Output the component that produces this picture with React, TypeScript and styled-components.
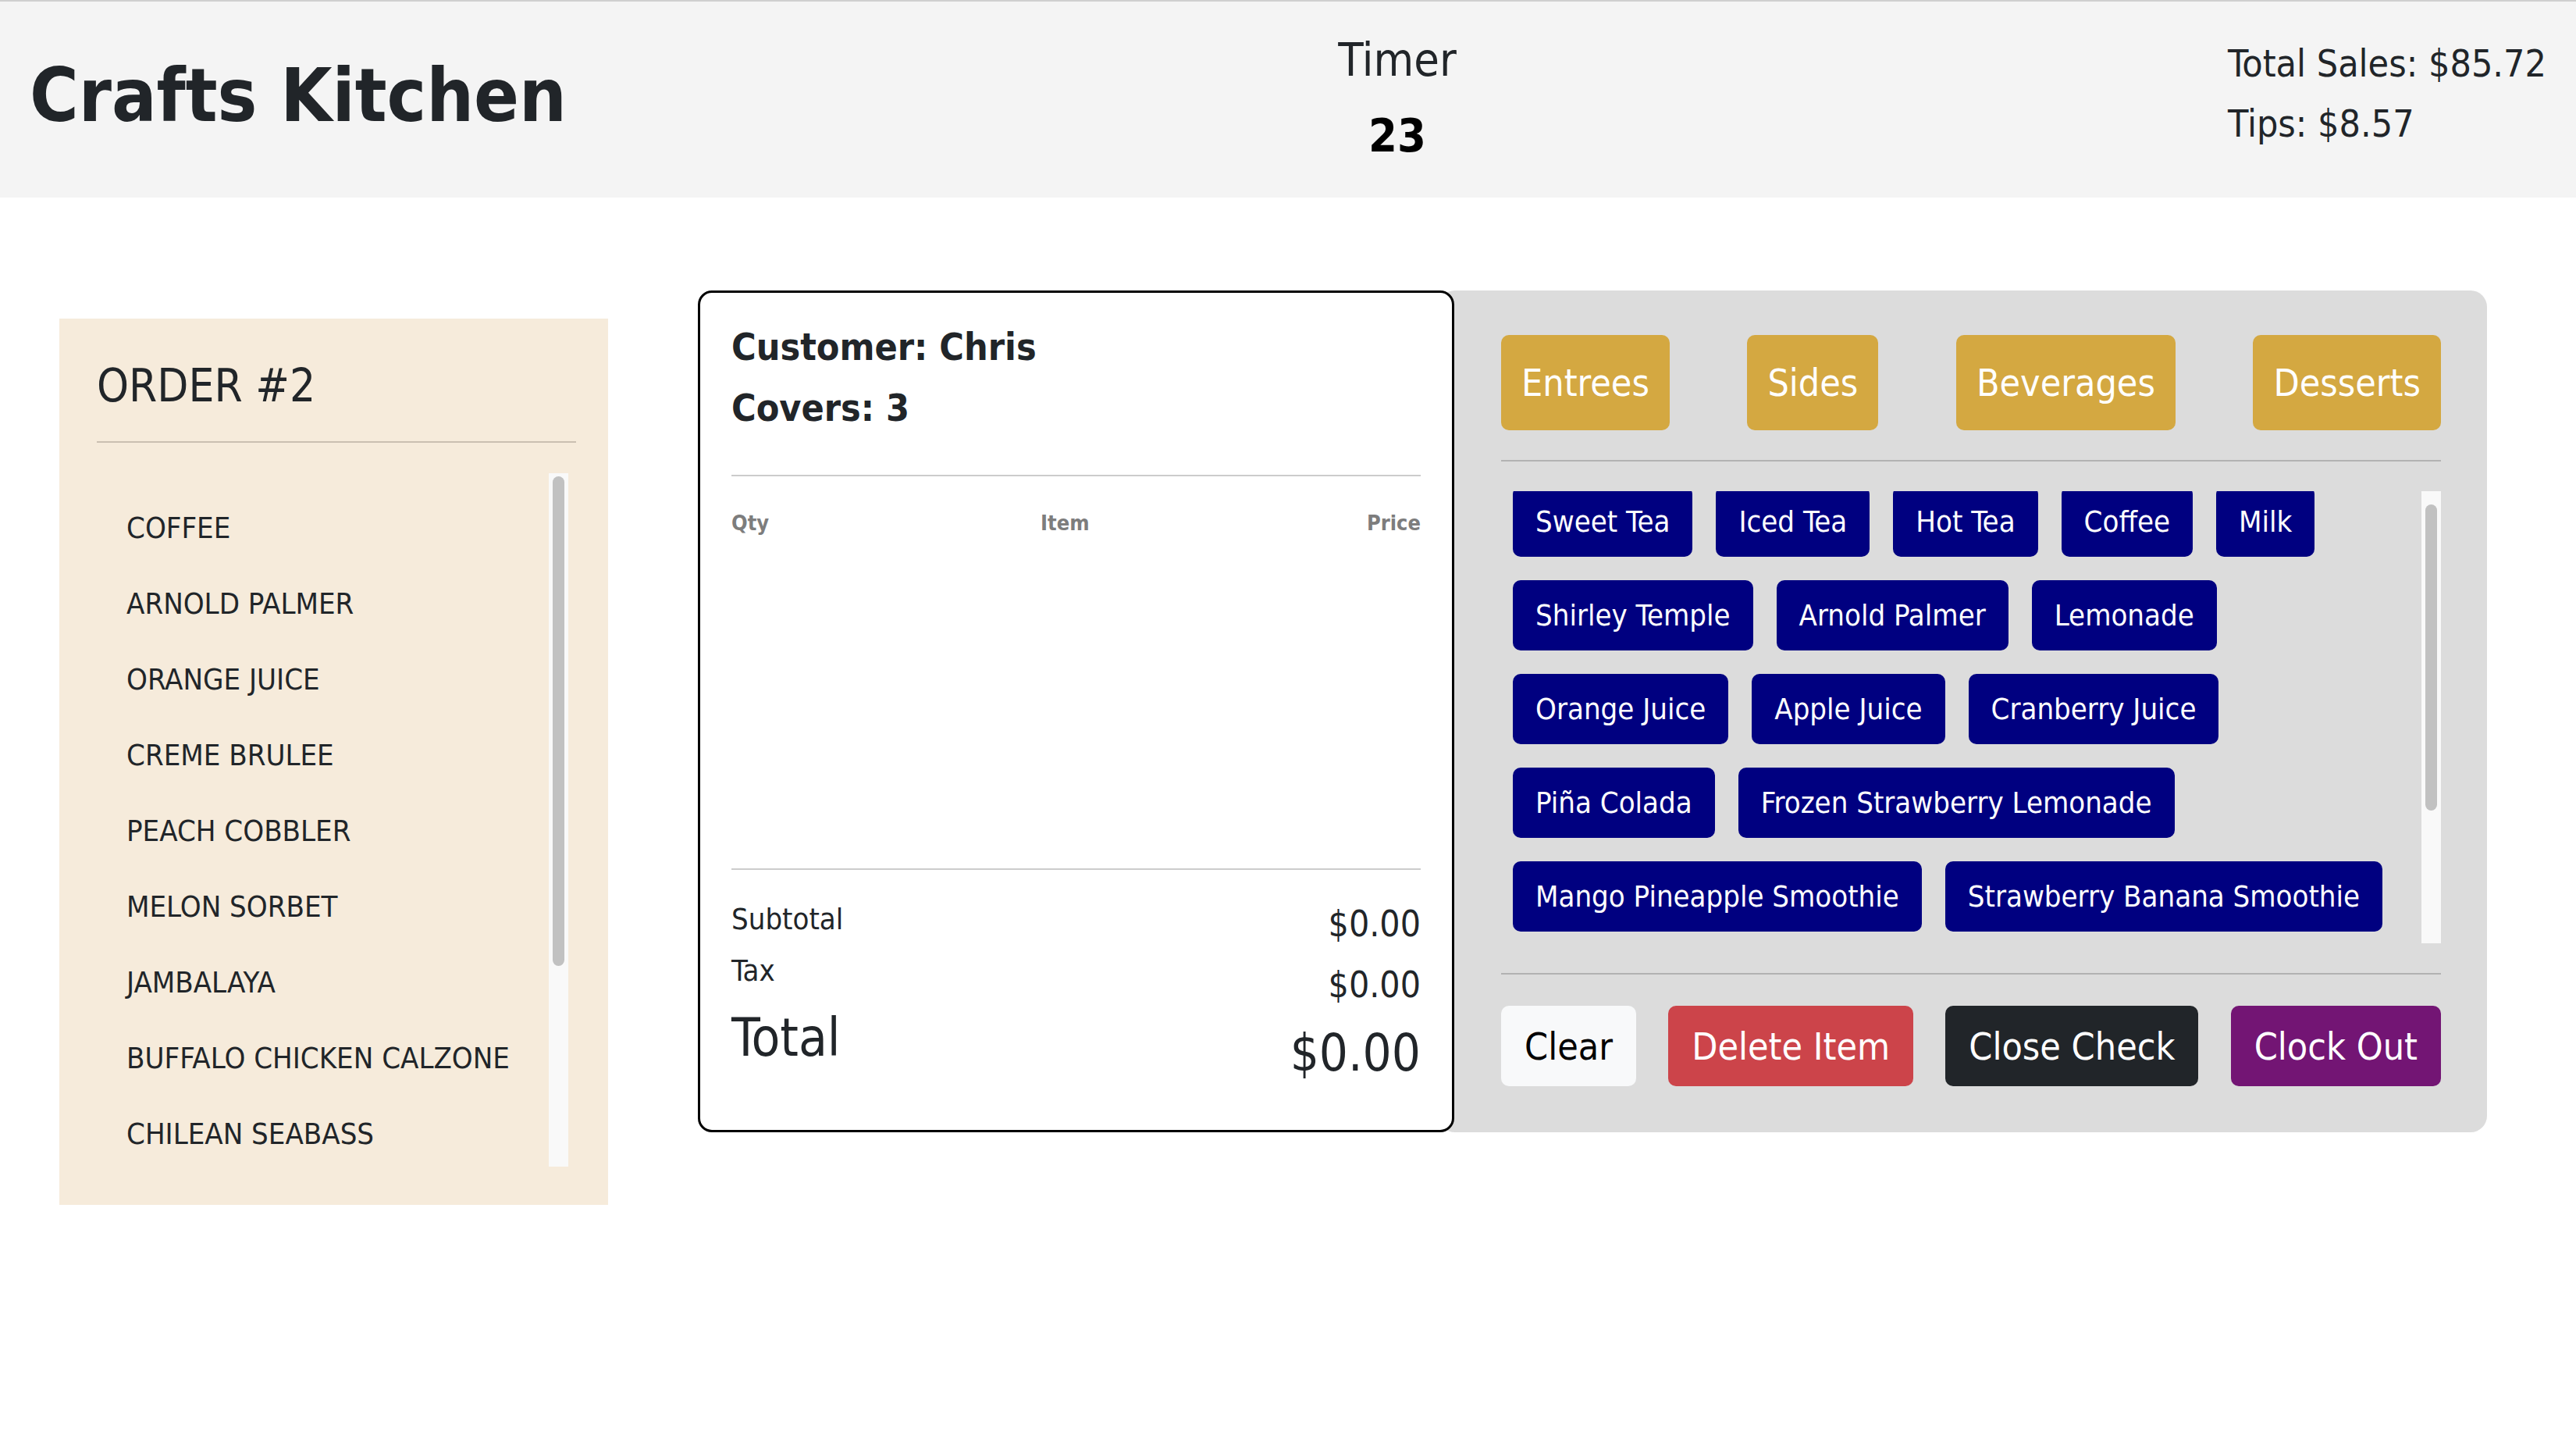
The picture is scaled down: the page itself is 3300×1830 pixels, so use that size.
import React from "react";
import styled, { createGlobalStyle } from "styled-components";

const FONT = `"DejaVu Sans Condensed", "DejaVu Sans", Verdana, sans-serif`;

const GlobalStyle = createGlobalStyle`
  html, body { margin: 0; padding: 0; background: #ffffff; }
  body { font-family: ${FONT}; color: #212529; }
  *, *::before, *::after { box-sizing: border-box; }
`;

const Page = styled.div`
  width: 3300px;
  min-height: 1830px;
  background: #ffffff;
`;

const Header = styled.header`
  height: 253px;
  background: #f4f4f4;
  border-top: 2px solid #cfcfcf;
  display: flex;
  align-items: center;
  justify-content: space-between;
  padding: 0 38px;
`;

const Brand = styled.h1`
  margin: 0 0 11px;
  font-family: ${FONT};
  font-size: 95px;
  font-weight: 700;
  line-height: 1.2;
  color: #212529;
`;

const TimerBlock = styled.div`
  display: flex;
  flex-direction: column;
  align-items: center;
  margin-bottom: 6px;
`;

const TimerLabel = styled.div`
  font-size: 59px;
  line-height: 71px;
  color: #212529;
`;

const TimerValue = styled.div`
  font-size: 59px;
  line-height: 71px;
  font-weight: 700;
  color: #000000;
  margin-top: 26px;
`;

const Stats = styled.div`
  display: flex;
  flex-direction: column;
  margin-bottom: 16px;
`;

const Stat = styled.div`
  font-size: 48px;
  line-height: 77px;
  color: #212529;
  white-space: nowrap;
`;

const Main = styled.main`
  display: flex;
  align-items: flex-start;
  padding: 119px 0 0 76px;
`;

const OrderPanel = styled.section`
  width: 703px;
  height: 1135px;
  margin-top: 36px;
  margin-right: 115px;
  background: #f6ebdb;
  padding: 51px 41px 0 48px;
  display: flex;
  flex-direction: column;
`;

const OrderTitle = styled.h2`
  margin: 0;
  font-family: ${FONT};
  font-size: 58px;
  font-weight: 400;
  line-height: 71px;
  color: #212529;
`;

const OrderRule = styled.hr`
  margin: 35px 0 0;
  border: 0;
  border-top: 2px solid #cabfb1;
`;

const OrderBody = styled.div`
  margin: 39px 10px 0 0;
  height: 888px;
  display: flex;
`;

const OrderList = styled.ul`
  flex: 1;
  margin: 0;
  padding: 22px 0 0 38px;
  list-style: none;
`;

const OrderItem = styled.li`
  height: 97px;
  line-height: 97px;
  font-size: 38px;
  color: #212529;
  text-transform: uppercase;
  white-space: nowrap;
`;

const ScrollTrack = styled.div<{ $height: number }>`
  flex: none;
  width: 25px;
  height: ${(p) => p.$height}px;
  background: #f9f9f9;
  padding: 0 5px;
`;

const ScrollThumb = styled.div<{ $offset: number; $size: number }>`
  margin-top: ${(p) => p.$offset}px;
  height: ${(p) => p.$size}px;
  background: #c1c1c1;
  border-radius: 8px;
`;

const CheckPanel = styled.section`
  position: relative;
  z-index: 1;
  width: 969px;
  height: 1078px;
  background: #ffffff;
  border: 3px solid #000000;
  border-radius: 18px;
  padding: 30px 40px 49px;
  display: flex;
  flex-direction: column;
`;

const CustomerLine = styled.div`
  font-size: 48px;
  font-weight: 700;
  line-height: 78px;
  color: #212529;
  white-space: nowrap;
`;

const CheckRule = styled.hr<{ $mt: number }>`
  margin: ${(p) => p.$mt}px 0 0;
  border: 0;
  border-top: 2px solid #cccccc;
`;

const ColumnHeads = styled.div`
  margin-top: 40px;
  display: grid;
  grid-template-columns: 1fr 1fr 1.1fr;
  font-size: 27px;
  line-height: 40px;
  font-weight: 700;
  color: #7d7d7d;
`;

const Head = styled.span<{ $align: "left" | "center" | "right" }>`
  text-align: ${(p) => p.$align};
`;

const LinesArea = styled.div`
  flex: 1;
`;

const Totals = styled.div`
  margin-top: 30px;
  display: flex;
  justify-content: space-between;
  align-items: flex-start;
`;

const TotalsColumn = styled.div<{ $right?: boolean }>`
  display: flex;
  flex-direction: column;
  align-items: ${(p) => (p.$right ? "flex-end" : "flex-start")};
`;

const TotalText = styled.div<{ $size: number; $lh: number }>`
  font-size: ${(p) => p.$size}px;
  line-height: ${(p) => p.$lh}px;
  color: #212529;
  white-space: nowrap;
`;

const MenuPanel = styled.section`
  width: 1343px;
  height: 1078px;
  margin-left: -20px;
  background: #dcdcdc;
  border-radius: 21px;
  padding: 57px 59px 57px 80px;
  display: flex;
  flex-direction: column;
`;

const CategoryRow = styled.div`
  display: flex;
  justify-content: space-between;
`;

const CategoryButton = styled.button`
  height: 122px;
  padding: 0 26px;
  font-family: ${FONT};
  font-size: 48px;
  color: #ffffff;
  background: #d4a841;
  border: 0;
  border-radius: 10px;
  white-space: nowrap;
`;

const MenuRule = styled.hr`
  margin: 38px 0 0;
  border: 0;
  border-top: 2px solid #b2b2b2;
`;

const MenuBody = styled.div`
  margin-top: 38px;
  height: 579px;
  display: flex;
`;

const ItemViewport = styled.div`
  flex: 1;
  height: 579px;
  overflow: hidden;
`;

const ItemWrap = styled.div`
  margin-top: -21px;
  display: flex;
  flex-wrap: wrap;
  align-content: flex-start;
`;

const ItemButton = styled.button`
  margin: 15px;
  height: 90px;
  padding: 0 29px;
  font-family: ${FONT};
  font-size: 38px;
  color: #ffffff;
  background: #000080;
  border: 0;
  border-radius: 10px;
  white-space: nowrap;
`;

const Actions = styled.div`
  margin-top: 40px;
  display: flex;
  justify-content: space-between;
`;

const variants: Record<string, { bg: string; fg: string }> = {
  light: { bg: "#f8f9fa", fg: "#000000" },
  danger: { bg: "#cc444a", fg: "#ffffff" },
  dark: { bg: "#212529", fg: "#ffffff" },
  purple: { bg: "#731574", fg: "#ffffff" },
};

const ActionButton = styled.button<{ $variant: string }>`
  height: 103px;
  padding: 0 30px;
  font-family: ${FONT};
  font-size: 48px;
  color: ${(p) => variants[p.$variant].fg};
  background: ${(p) => variants[p.$variant].bg};
  border: 0;
  border-radius: 10px;
  white-space: nowrap;
`;

const orderItems = [
  "Coffee",
  "Arnold Palmer",
  "Orange Juice",
  "Creme Brulee",
  "Peach Cobbler",
  "Melon Sorbet",
  "Jambalaya",
  "Buffalo Chicken Calzone",
  "Chilean Seabass",
];

const categories = ["Entrees", "Sides", "Beverages", "Desserts"];

const beverages = [
  "Sweet Tea",
  "Iced Tea",
  "Hot Tea",
  "Coffee",
  "Milk",
  "Shirley Temple",
  "Arnold Palmer",
  "Lemonade",
  "Orange Juice",
  "Apple Juice",
  "Cranberry Juice",
  "Piña Colada",
  "Frozen Strawberry Lemonade",
  "Mango Pineapple Smoothie",
  "Strawberry Banana Smoothie",
];

export default function App() {
  return (
    <Page>
      <GlobalStyle />
      <Header>
        <Brand>Crafts Kitchen</Brand>
        <TimerBlock>
          <TimerLabel>Timer</TimerLabel>
          <TimerValue>23</TimerValue>
        </TimerBlock>
        <Stats>
          <Stat>Total Sales: $85.72</Stat>
          <Stat>Tips: $8.57</Stat>
        </Stats>
      </Header>
      <Main>
        <OrderPanel>
          <OrderTitle>ORDER #2</OrderTitle>
          <OrderRule />
          <OrderBody>
            <OrderList>
              {orderItems.map((item) => (
                <OrderItem key={item}>{item}</OrderItem>
              ))}
            </OrderList>
            <ScrollTrack $height={888}>
              <ScrollThumb $offset={4} $size={627} />
            </ScrollTrack>
          </OrderBody>
        </OrderPanel>
        <CheckPanel>
          <CustomerLine>Customer: Chris</CustomerLine>
          <CustomerLine>Covers: 3</CustomerLine>
          <CheckRule $mt={47} />
          <ColumnHeads>
            <Head $align="left">Qty</Head>
            <Head $align="center">Item</Head>
            <Head $align="right">Price</Head>
          </ColumnHeads>
          <LinesArea />
          <CheckRule $mt={0} />
          <Totals>
            <TotalsColumn>
              <TotalText $size={38} $lh={66}>Subtotal</TotalText>
              <TotalText $size={38} $lh={66}>Tax</TotalText>
              <TotalText $size={67} $lh={106}>Total</TotalText>
            </TotalsColumn>
            <TotalsColumn $right>
              <TotalText $size={46} $lh={78}>$0.00</TotalText>
              <TotalText $size={46} $lh={78}>$0.00</TotalText>
              <TotalText $size={65} $lh={98}>$0.00</TotalText>
            </TotalsColumn>
          </Totals>
        </CheckPanel>
        <MenuPanel>
          <CategoryRow>
            {categories.map((c) => (
              <CategoryButton key={c}>{c}</CategoryButton>
            ))}
          </CategoryRow>
          <MenuRule />
          <MenuBody>
            <ItemViewport>
              <ItemWrap>
                {beverages.map((b) => (
                  <ItemButton key={b}>{b}</ItemButton>
                ))}
              </ItemWrap>
            </ItemViewport>
            <ScrollTrack $height={579}>
              <ScrollThumb $offset={17} $size={392} />
            </ScrollTrack>
          </MenuBody>
          <MenuRule />
          <Actions>
            <ActionButton $variant="light">Clear</ActionButton>
            <ActionButton $variant="danger">Delete Item</ActionButton>
            <ActionButton $variant="dark">Close Check</ActionButton>
            <ActionButton $variant="purple">Clock Out</ActionButton>
          </Actions>
        </MenuPanel>
      </Main>
    </Page>
  );
}
